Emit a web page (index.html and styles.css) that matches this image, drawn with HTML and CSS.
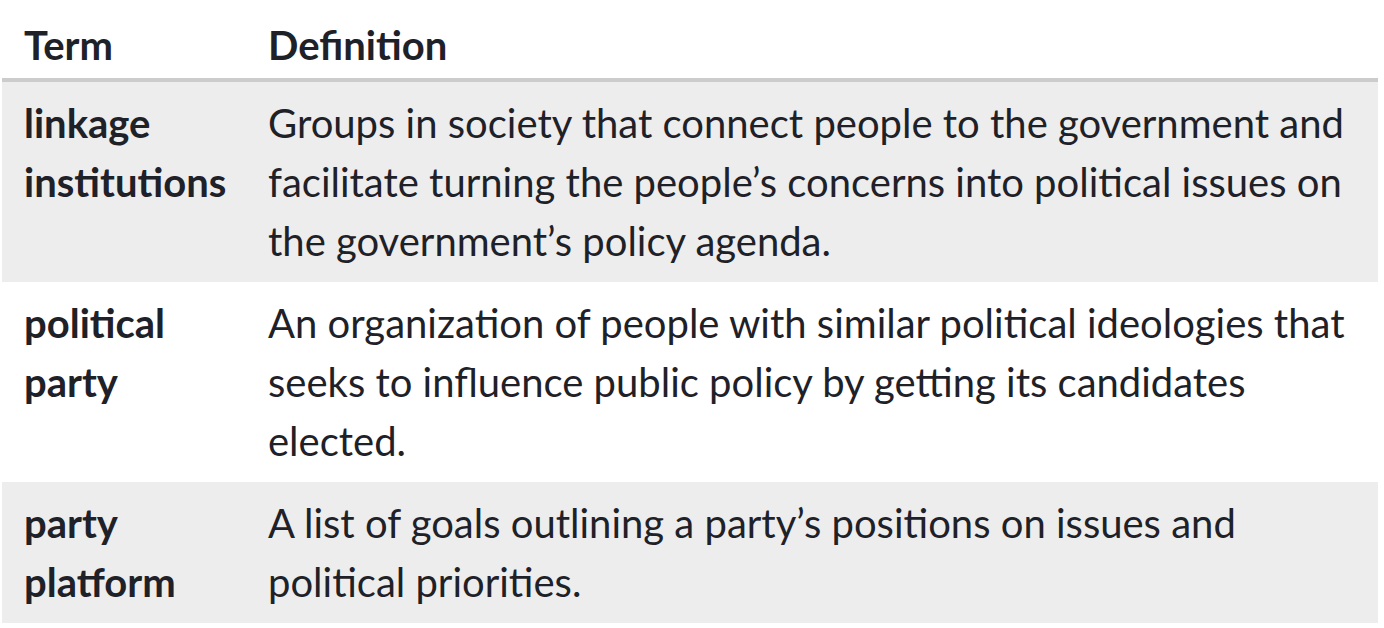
FILE: index.html
```html
<!DOCTYPE html>
<html lang="en">
<head>
<meta charset="utf-8">
<title>Terms</title>
<link rel="stylesheet" href="styles.css">
</head>
<body>
<table class="terms">
  <colgroup>
    <col class="col-term">
    <col class="col-def">
  </colgroup>
  <thead>
    <tr>
      <th>Term</th>
      <th>Definition</th>
    </tr>
  </thead>
  <tbody>
    <tr class="shaded">
      <td class="term">linkage institutions</td>
      <td>Groups in society that connect people to the government and facilitate turning the people’s concerns into political issues on the government’s policy agenda.</td>
    </tr>
    <tr>
      <td class="term">political party</td>
      <td>An organization of people with similar political ideologies that seeks to influence public policy by getting its candidates elected.</td>
    </tr>
    <tr class="shaded">
      <td class="term">party platform</td>
      <td>A list of goals outlining a party’s positions on issues and political priorities.</td>
    </tr>
  </tbody>
</table>
</body>
</html>
```

FILE: styles.css
```css
html, body {
  margin: 0;
  padding: 0;
  background: #ffffff;
}

body {
  font-family: Lato, "Open Sans", sans-serif;
  color: #1f2128;
}

.terms {
  border-collapse: collapse;
  table-layout: fixed;
  width: 1376px;
  margin-left: 2px;
  font-size: 40px;
  line-height: 59px;
}

.col-term {
  width: 244px;
}

.terms th {
  text-align: left;
  font-weight: 700;
  padding: 16px 22px 3px;
  border-bottom: 4px solid #cccccc;
}

.terms td {
  vertical-align: top;
  padding: 11.5px 22px;
}

.terms td.term {
  font-weight: 700;
}

.shaded td {
  background: #ededed;
}
```
